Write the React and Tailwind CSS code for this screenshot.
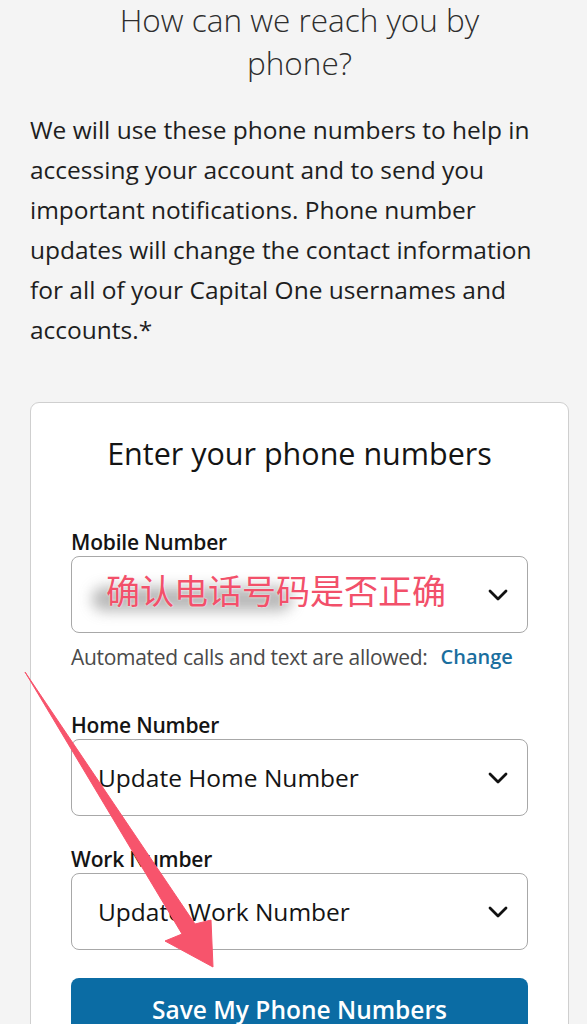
import React from "react";

const font = { fontFamily: '"Open Sans", "Noto Sans", "Noto Sans CJK SC", sans-serif' };

function Chevron() {
  return (
    <svg width="22" height="14" viewBox="0 0 22 14" className="shrink-0">
      <path d="M3 3 L11 11 L19 3" fill="none" stroke="#111" strokeWidth="2.8" strokeLinecap="round" strokeLinejoin="round" />
    </svg>
  );
}

function PhoneSelect({ label, children, className = "" }) {
  return (
    <div className={className}>
      <div className="text-[21px] leading-[24px] font-semibold tracking-[-0.2px] text-[#141414]">{label}</div>
      <div className="mt-[2px] h-[77px] rounded-[8px] border border-[#a8a8a8] bg-white flex items-center justify-between pl-[26px] pr-[18px]">
        {children}
        <Chevron />
      </div>
    </div>
  );
}

export default function App() {
  return (
    <div style={font} className="relative h-[1024px] w-full overflow-hidden bg-[#f4f4f4]">
      <h1 className="mt-[-2px] pl-[30px] pr-[18px] text-center text-[31.5px] leading-[43px] font-light text-[#2e2e2e]">
        How can we reach you by
        <br />
        phone?
      </h1>

      <p className="mt-[26px] pl-[30px] pr-[30px] text-[24.5px] leading-[40px] text-[#1e1e1e]">
        We will use these phone numbers to help in accessing your account and to send you important
        notifications. Phone number updates will change the contact information for all of your
        Capital One usernames and accounts.*
      </p>

      <div className="ml-[30px] mr-[18px] mt-[52px] rounded-[9px] border border-[#cfcfcf] bg-white px-[40px] pt-[32px] pb-10">
        <h2 className="text-center text-[30.5px] leading-[36px] text-[#141414]">Enter your phone numbers</h2>

        <PhoneSelect label="Mobile Number" className="mt-[59px]">
          <div className="relative -mt-[8px] pl-[8px]">
            <div className="absolute left-[-6px] top-[18px] h-[24px] w-[200px] rounded-full bg-[#8a8a8a] opacity-60 blur-[7px]" />
            <span className="relative text-[34px] leading-[44px] text-[#f2506a] [text-shadow:0_0_2px_#fff]">
              确认电话号码是否正确
            </span>
          </div>
        </PhoneSelect>

        <div className="mt-[12px] flex items-center text-[21px] leading-[24px] text-[#4a4a4a]">
          <span className="tracking-[-0.3px]">Automated calls and text are allowed:</span>
          <span className="ml-[13px] text-[20px] font-semibold text-[#1a6e9e]">Change</span>
        </div>

        <PhoneSelect label="Home Number" className="mt-[44px]">
          <span className="text-[24.5px] leading-[32px] text-[#141414]">Update Home Number</span>
        </PhoneSelect>

        <PhoneSelect label="Work Number" className="mt-[31px]">
          <span className="text-[24.5px] leading-[32px] text-[#141414]">Update Work Number</span>
        </PhoneSelect>

        <button className="mt-[28px] h-[64px] w-full rounded-[8px] bg-[#0b6ca4] text-[24.5px] font-semibold text-white">
          Save My Phone Numbers
        </button>
      </div>

      <svg className="pointer-events-none absolute left-0 top-0" width="587" height="1024" viewBox="0 0 587 1024">
        <polygon
          points="25,672 195,924 211,920 213,967 165,941 182,934"
          fill="#f7546c"
          stroke="#f7546c"
          strokeWidth="1"
          strokeLinejoin="round"
        />
      </svg>
    </div>
  );
}
